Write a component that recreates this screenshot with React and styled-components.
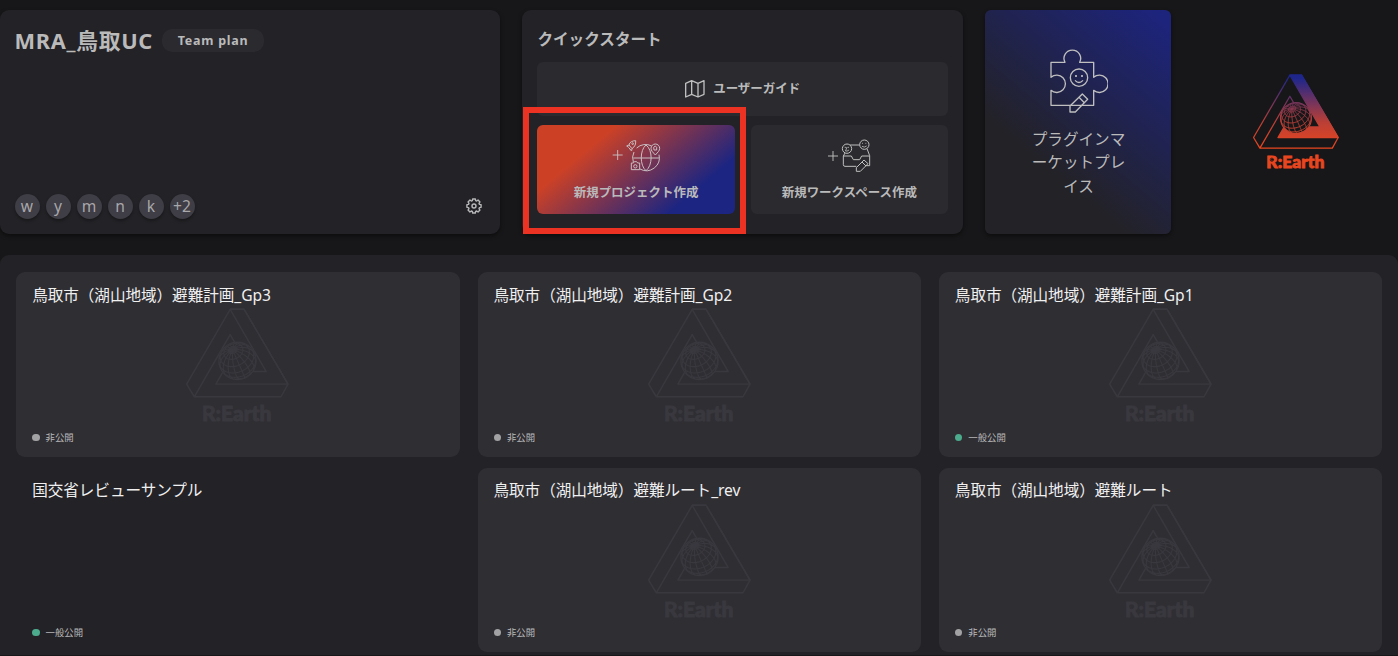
import React from "react";
import styled, { createGlobalStyle } from "styled-components";

const Global = createGlobalStyle`
  * { box-sizing: border-box; }
  html, body { margin: 0; height: 100%; overflow: hidden; background: #171719; }
  body { font-family: "Noto Sans", "Noto Sans CJK JP", sans-serif; color: #bababb; }
  #root { height: 100%; }
  svg { display: block; flex: none; }
`;

const Page = styled.div`
  height: 656px;
  display: flex;
  flex-direction: column;
  gap: 21px;
  padding: 10px 0 1px;
`;

const TopRow = styled.header`
  display: flex;
  gap: 22px;
  height: 224px;
  flex: none;
`;

const Panel = styled.section`
  display: flex;
  flex-direction: column;
  align-items: ${(p) => p.$align || "stretch"};
  width: ${(p) => p.$width}px;
  padding: ${(p) => p.$padding || "0 15px"};
  background: ${(p) => p.$background || "#232226"};
  border-radius: ${(p) => p.$radius || 9}px;
  box-shadow: 0 2px 4px rgba(0, 0, 0, 0.45);
`;

const TeamHeader = styled.div`
  display: flex;
  align-items: center;
  gap: 9px;
  height: 61px;
`;

const TeamName = styled.h1`
  margin: 0;
  font-size: 21.8px;
  font-weight: 700;
  line-height: 30px;
  letter-spacing: 0.7px;
  white-space: nowrap;
`;

const PlanBadge = styled.span`
  width: 102px;
  height: 23px;
  border-radius: 10px;
  background: #2b2a2f;
  text-align: center;
  font-size: 12.5px;
  font-weight: 700;
  line-height: 23px;
  letter-spacing: 0.75px;
`;

const TeamFooter = styled.div`
  display: flex;
  align-items: center;
  gap: 6px;
  margin-top: auto;
  height: 56px;
`;

const Avatar = styled.span`
  width: 25px;
  height: 25px;
  border-radius: 50%;
  background: #3f3d45;
  color: #a8a7aa;
  font-size: 15.6px;
  line-height: 25px;
  text-align: center;
  white-space: nowrap;
  box-shadow: 0 2px 3px rgba(0, 0, 0, 0.3);
`;

const SettingsButton = styled.span`
  margin-left: auto;
  margin-right: 3px;
`;

const QuickTitle = styled.h2`
  margin: 0;
  height: 52px;
  padding-top: 18px;
  font-size: 15.6px;
  line-height: 22px;
  font-weight: 700;
`;

const QuickGrid = styled.div`
  display: grid;
  grid-template: 54px 89px / 1fr 1fr;
  gap: 9px 16px;
`;

const QuickButton = styled.div`
  position: relative;
  grid-column: ${(p) => (p.$wide ? "1 / -1" : "auto")};
  display: flex;
  flex-direction: ${(p) => (p.$wide ? "row" : "column")};
  align-items: center;
  justify-content: ${(p) => (p.$wide ? "center" : "flex-start")};
  gap: ${(p) => (p.$wide ? 8 : 9)}px;
  padding-top: ${(p) => (p.$wide ? 0 : 13)}px;
  border-radius: 6px;
  background: ${(p) => p.$background || "#2b2a2e"};
`;

const QuickLabel = styled.span`
  font-size: 12.48px;
  font-weight: 700;
  line-height: 20px;
  white-space: nowrap;
`;

const Highlight = styled.div`
  position: absolute;
  left: -14.6px;
  top: -18px;
  width: 223px;
  height: 127px;
  border: 6px solid #eb3223;
`;

const MarketLabel = styled.p`
  margin: 14px 0 0;
  width: 95px;
  font-size: 15.6px;
  line-height: 23.4px;
  text-align: center;
  line-break: anywhere;
  word-break: break-all;
`;

const Brand = styled.div`
  display: flex;
  flex: 1;
  padding: 64px 0 0 59px;
`;

const Projects = styled.main`
  flex: 1;
  display: grid;
  grid-template: 184.2px 184.2px / 1fr 1fr 1fr;
  gap: 11px 18px;
  padding: 17.4px 15.8px 0 16.2px;
  background: #232226;
  border-radius: 9px 9px 0 0;
`;

const Card = styled.article`
  display: grid;
  grid-template-rows: 36px 1fr 33px;
  padding: 0 16px;
  border-radius: 9px;
  background: ${(p) => (p.$plain ? "transparent" : "#2f2e33")};
`;

const CardTitle = styled.h3`
  margin: 0;
  padding-top: 11.6px;
  color: #f0f0f0;
  font-size: 15.6px;
  line-height: 23px;
  letter-spacing: -0.05px;
  font-weight: 400;
  white-space: nowrap;
`;

const CardArt = styled.div`
  display: flex;
  justify-content: center;
  align-items: flex-start;
  min-height: 0;
`;

const Status = styled.div`
  display: flex;
  align-items: center;
  gap: 6px;
  font-size: 9.4px;
  line-height: 14px;
  height: 28px;
`;

const Dot = styled.i`
  width: 7.4px;
  height: 7.4px;
  border-radius: 50%;
  background: ${(p) => (p.$public ? "#4bab8c" : "#a2a1a3")};
`;

// Orthographic projection of a tilted globe's graticule.
function graticule(cx, cy, r) {
  const pole = [-0.27, -0.61, 0.745];
  const n = Math.hypot(pole[0], pole[1]);
  const u = [-pole[1] / n, pole[0] / n, 0];
  const v = [
    pole[1] * u[2] - pole[2] * u[1],
    pole[2] * u[0] - pole[0] * u[2],
    pole[0] * u[1] - pole[1] * u[0],
  ];
  const point = (lat, lon) =>
    [0, 1, 2].map(
      (i) =>
        Math.sin(lat) * pole[i] +
        Math.cos(lat) * (Math.cos(lon) * u[i] + Math.sin(lon) * v[i])
    );
  const trace = (at) => {
    let d = "";
    let open = false;
    for (let i = 0; i <= 72; i++) {
      const p = at(i / 72);
      if (p[2] >= 0) {
        d += `${open ? "L" : "M"}${(cx + p[0] * r).toFixed(1)} ${(cy + p[1] * r).toFixed(1)}`;
        open = true;
      } else open = false;
    }
    return d;
  };
  let d = "";
  for (let k = 0; k < 16; k++)
    d += trace((t) => point(Math.PI / 2 - t * Math.PI, (k * Math.PI) / 8));
  for (const lat of [-35, -12, 11, 34, 57, 76])
    d += trace((t) => point((lat * Math.PI) / 180, t * Math.PI * 2));
  return d;
}
const GLOBE = graticule(205, 196, 55);

const EarthLogo = ({ width, height, color, textColor, backdrop, solid, line = 4.5 }) => (
  <svg width={width} height={height} viewBox="48 37 314 364" fill="none">
    <defs>
      <linearGradient id="brand" gradientUnits="userSpaceOnUse" x1="0" y1="41" x2="0" y2="304">
        <stop offset="0.04" stopColor="#1e268c" />
        <stop offset="0.65" stopColor="#bb3f35" />
        <stop offset="1" stopColor="#e8461f" />
      </linearGradient>
    </defs>
    <g stroke={color} strokeWidth={line} strokeLinejoin="round">
      <path d="M183 41H225L357 266L336 304H75L52 266Z" />
      <path d="M205 155L183 117L75 304" />
      <path
        d="M183 41L291 228H162L140 266H357L225 41Z"
        fill={solid ? color : "none"}
      />
      <circle cx="205" cy="196" r="56" fill={backdrop} strokeWidth={line * 0.9} />
      <path d={GLOBE} strokeWidth={line * 0.75} />
    </g>
    <text
      x="98"
      y="377"
      fill={textColor}
      stroke={textColor}
      strokeWidth="3"
      fontFamily="Lato, sans-serif"
      fontWeight="900"
      fontSize="63"
      textLength="209"
      lengthAdjust="spacingAndGlyphs"
    >
      R:Earth
    </text>
    <circle cx="118" cy="346" r="6" stroke={backdrop} strokeWidth="2.5" />
  </svg>
);

const MapIcon = () => (
  <svg width="20" height="18" viewBox="510 240 60 54" fill="none" stroke="#bfbfbf" strokeWidth="4" strokeLinejoin="round">
    <path d="M512 250L530 242L549 250L567 242V283L549 291L530 283L512 291ZM530 242V283M549 250V291" />
  </svg>
);

const gearPath = () => {
  const pts = [];
  for (let i = 0; i < 8; i++) {
    for (const [off, r] of [[-0.29, 5.7], [-0.19, 7.2], [0.19, 7.2], [0.29, 5.7]]) {
      const a = (i * Math.PI) / 4 + off;
      pts.push(`${(8 + r * Math.cos(a)).toFixed(2)} ${(8 + r * Math.sin(a)).toFixed(2)}`);
    }
  }
  return `M${pts.join("L")}Z`;
};

const GearIcon = () => (
  <svg width="16" height="16" viewBox="0 0 16 16" fill="none" stroke="#b8b8ba" strokeWidth="1.4" strokeLinejoin="round">
    <path d={gearPath()} />
    <circle cx="8" cy="8" r="2" />
  </svg>
);

const ProjectIcon = () => (
  <svg width="49" height="36" viewBox="288 114 147 108" fill="none" stroke="#c9c0c2" strokeWidth="3" strokeLinejoin="round">
    <path d="M290 165H320M305 150V180" strokeWidth="2.8" />
    <path d="M362 144A39 39 0 0 1 407 138M429 164A39 39 0 0 1 372 207M352 186A39 39 0 0 1 354 156M352 174H430" />
    <path d="M390 135C371 150 371 197 390 212C410 197 411 150 390 135Z" />
    <path d="M339 135C340 126 350 122 359 122C360 132 357 140 348 146ZM339 135L332 138L338 142M348 146L347 152L341 148M338 143L344 149" />
    <circle cx="350" cy="131" r="2.5" />
    <path d="M346 189H352L355 185H362L365 189H371V209H346Z" />
    <circle cx="358" cy="199" r="5" />
    <path d="M418 165C410 156 405 152 405 145A13 13 0 0 1 431 145C431 152 426 156 418 165Z" />
    <path d="M413 142L418 138L422 142V150H414Z" />
  </svg>
);

const WorkspaceIcon = () => (
  <svg width="44" height="36" viewBox="246 70 132 108" fill="none" stroke="#bfbfbf" strokeWidth="3" strokeLinejoin="round">
    <path d="M249 124H279M264 109V139" strokeWidth="2.8" />
    <circle cx="306" cy="102" r="14" />
    <circle cx="358" cy="90" r="14" />
    <path d="M299 98H303M308 98H312M300 108Q306 112 312 106M306 97L302 108M351 86H354M361 86H364M351 95Q358 100 365 94" strokeWidth="2.4" />
    <path d="M315 91H344M300 115L295 124V150Q295 155 300 155H334M366 102L374 123V153H360M295 124H319L325 135H344L350 124H374" />
    <path d="M334 159L357 136L369 147L346 170H334ZM351 142L362 153" />
  </svg>
);

const PuzzleIcon = () => (
  <svg width="58" height="66" viewBox="228 144 174 198" fill="none" stroke="#bfbfbf" strokeWidth="4" strokeLinejoin="round">
    <path d="M231 187H273A25 25 0 1 1 317 187H359V232A26 26 0 1 1 359 271V316H231V271A26 26 0 1 0 231 232Z" />
    <circle cx="315" cy="233" r="26" />
    <path d="M303 241Q315 254 327 241" />
    <path d="M306 225V231M324 225V231" strokeWidth="5" />
    <path d="M288 318L325 282L341 298L304 336H288ZM315 292L331 308" />
  </svg>
);

const members = ["w", "y", "m", "n", "k", "+2"];

const projects = [
  { name: "鳥取市（湖山地域）避難計画_Gp3" },
  { name: "鳥取市（湖山地域）避難計画_Gp2" },
  { name: "鳥取市（湖山地域）避難計画_Gp1", open: true },
  { name: "国交省レビューサンプル", open: true, plain: true },
  { name: "鳥取市（湖山地域）避難ルート_rev" },
  { name: "鳥取市（湖山地域）避難ルート" },
];

export default function App() {
  return (
    <>
      <Global />
      <Page>
        <TopRow>
          <Panel $width={500} $padding="0 15px 0 14.5px">
            <TeamHeader>
              <TeamName>MRA_鳥取UC</TeamName>
              <PlanBadge>Team plan</PlanBadge>
            </TeamHeader>
            <TeamFooter>
              {members.map((m) => (
                <Avatar key={m}>{m}</Avatar>
              ))}
              <SettingsButton>
                <GearIcon />
              </SettingsButton>
            </TeamFooter>
          </Panel>
          <Panel $width={441} $padding="0 15px 0 15.4px">
            <QuickTitle>クイックスタート</QuickTitle>
            <QuickGrid>
              <QuickButton $wide>
                <MapIcon />
                <QuickLabel>ユーザーガイド</QuickLabel>
              </QuickButton>
              <QuickButton $background="linear-gradient(140deg, #cc4126 26%, #1c2581 78%)">
                <ProjectIcon />
                <QuickLabel>新規プロジェクト作成</QuickLabel>
                <Highlight />
              </QuickButton>
              <QuickButton>
                <WorkspaceIcon />
                <QuickLabel>新規ワークスペース作成</QuickLabel>
              </QuickButton>
            </QuickGrid>
          </Panel>
          <Panel
            $width={186}
            $radius={6}
            $align="center"
            $padding="38px 0 0 1px"
            $background="linear-gradient(220deg, #1d247c 4%, #232226 70%)"
          >
            <PuzzleIcon />
            <MarketLabel>プラグインマーケットプレイス</MarketLabel>
          </Panel>
          <Brand>
            <EarthLogo
              width={88}
              height={101}
              color="url(#brand)"
              textColor="#e8461f"
              backdrop="#171719"
              solid
            />
          </Brand>
        </TopRow>
        <Projects>
          {projects.map((p) => (
            <Card key={p.name} $plain={p.plain}>
              <CardTitle>{p.name}</CardTitle>
              <CardArt>
                {!p.plain && (
                  <EarthLogo
                    width={105}
                    height={121}
                    color="#39383e"
                    textColor="#39383e"
                    backdrop="#2f2e33"
                  />
                )}
              </CardArt>
              <Status>
                <Dot $public={p.open} />
                {p.open ? "一般公開" : "非公開"}
              </Status>
            </Card>
          ))}
        </Projects>
      </Page>
    </>
  );
}
